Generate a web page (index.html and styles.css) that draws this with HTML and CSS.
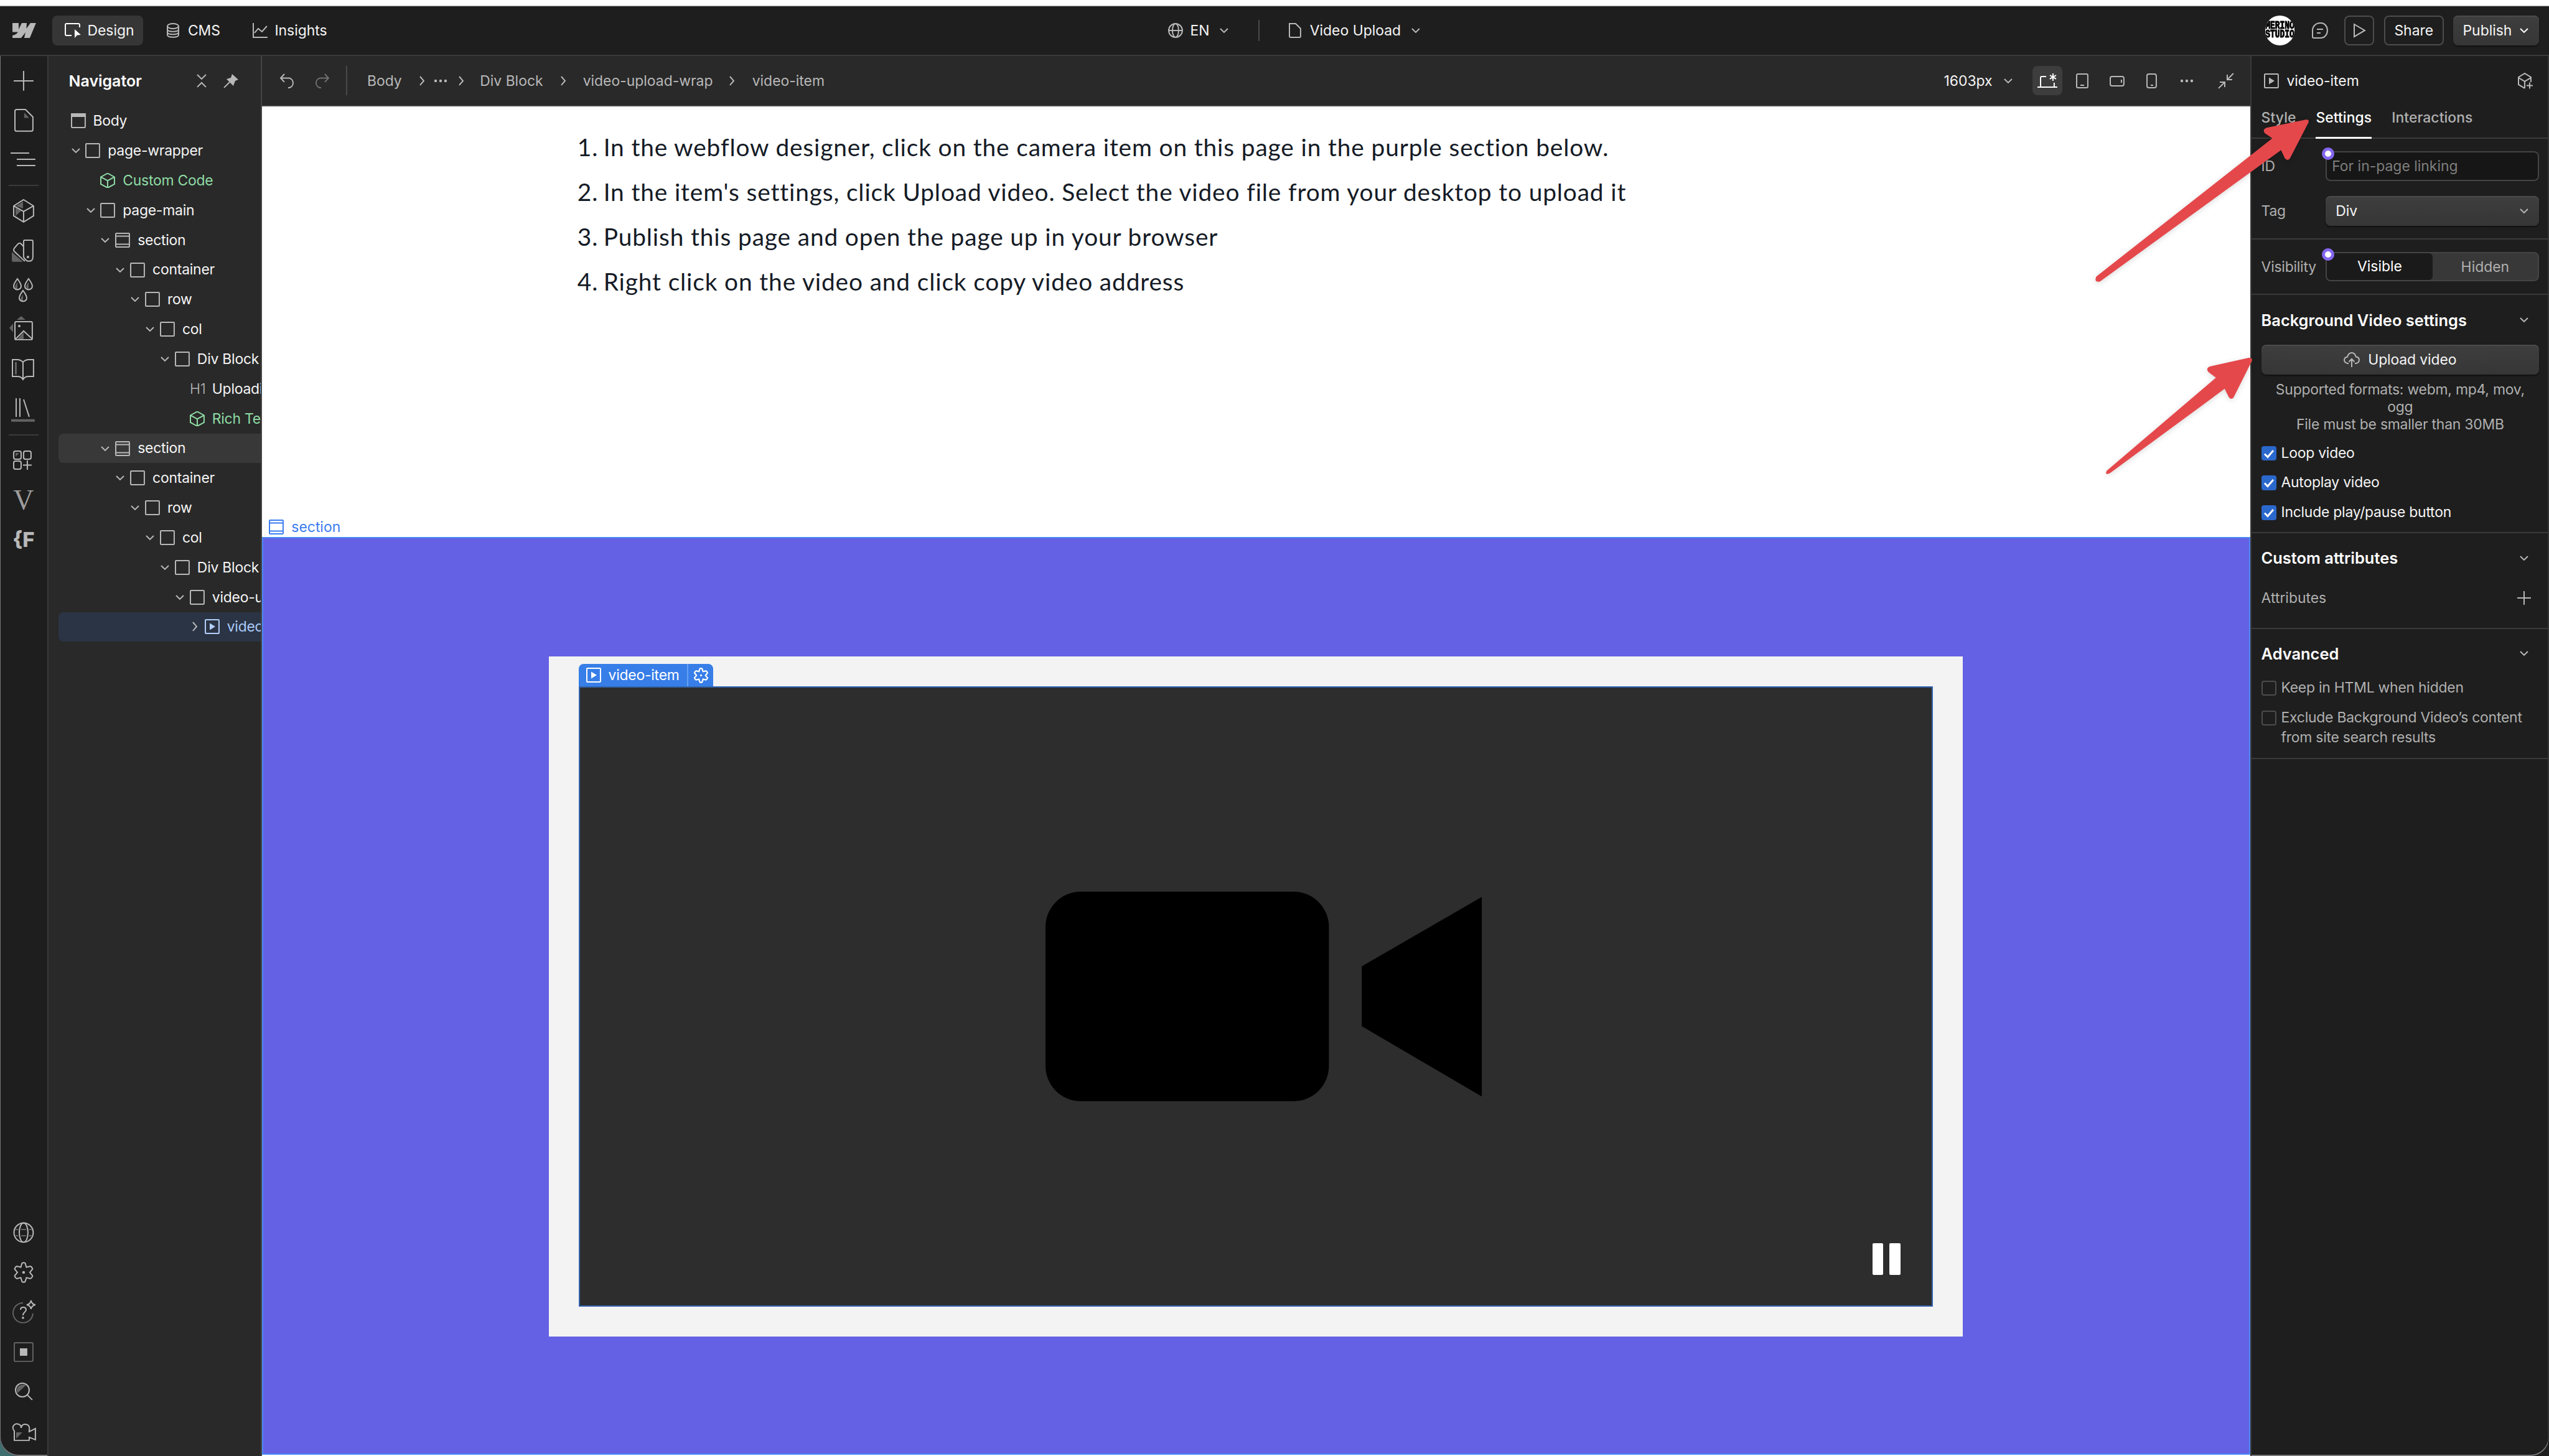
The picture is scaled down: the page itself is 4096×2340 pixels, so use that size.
FILE: index.html
```html
<!DOCTYPE html>
<html lang="en">
<head>
    <meta charset="UTF-8">
    <meta name="viewport" content="width=device-width, initial-scale=1.0">
    <title>Video Upload</title>
    <link rel="stylesheet" href="styles.css">
</head>
<body>
    <!-- icons used more than once -->
    <svg class="sprite">
        <symbol id="down" viewBox="0 0 24 24"><path d="M6 9l6 6 6-6"/></symbol>
        <symbol id="right" viewBox="0 0 24 24"><path d="M9 5l6 7-6 7"/></symbol>
        <symbol id="box" viewBox="0 0 24 24"><rect x="1" y="1" width="22" height="22" rx="1"/></symbol>
        <symbol id="section" viewBox="0 0 24 24"><rect x="1" y="1" width="22" height="22" rx="1"/><path d="M1 5.500h22M1 18.500h22"/></symbol>
        <symbol id="cube" viewBox="0 0 24 24"><path d="M12 0.500l11 6v11.500l-11 6-11-6v-11.500zM1 6.500l11 6 11-6M12 12.500v11"/></symbol>
        <symbol id="video" viewBox="0 0 24 24"><rect x="1" y="1" width="22" height="22" rx="1"/><path class="solid" d="M8 6.500v11l9-5.500z"/></symbol>
        <symbol id="gear" viewBox="0 0 40 40"><path d="M17.500 5q2.500-1.500 5 0l2 6.500 6.500-1.500q2.500 1 3.500 4.500l-4.500 5.500 4.500 5.500q-1 3.500-3.500 4.500l-6.500-1.500-2 6.500q-2.500 1.500-5 0l-2-6.500-6.500 1.500q-2.500-1-3.500-4.500l4.500-5.500-4.500-5.500q1-3.500 3.500-4.500l6.500 1.500z"/><circle class="solid" cx="20" cy="20" r="2.200"/></symbol>
        <symbol id="plus" viewBox="0 0 24 24"><path d="M12 1v22M1 12h22"/></symbol>
    </svg>

    <div class="app">
        <header class="topbar">
            <div class="topbar-left">
                <svg class="logo" viewBox="0 0 38 24"><path class="solid" d="M0 0h10v10l5-10h8l-.5 9 6.500-9h9L28 24h-9l2-9-7 9H0v-4q6-1 9-5.500H0z"/></svg>
                <div class="mode active">
                    <svg viewBox="0 0 26 24"><path d="M11 20H3a2 2 0 0 1-2-2V3a2 2 0 0 1 2-2h19a2 2 0 0 1 2 2v4"/><path class="solid" d="M16 10l10 9-6 .5-4 4.500z"/></svg>
                    <span>Design</span>
                </div>
                <div class="mode cms">
                    <svg viewBox="0 0 20 24"><ellipse cx="10" cy="5" rx="9" ry="4"/><path d="M1 5v14c0 5 18 5 18 0V5M1 10c0 5 18 5 18 0M1 14.500c0 5 18 5 18 0"/></svg>
                    <span>CMS</span>
                </div>
                <div class="mode insights">
                    <svg viewBox="0 0 24 24"><path d="M1 0v23h23M3 16l6-7 6 5L23 5"/></svg>
                    <span>Insights</span>
                </div>
            </div>
            <div class="topbar-center">
                <svg class="i24" viewBox="0 0 24 24"><circle cx="12" cy="12" r="11"/><ellipse cx="12" cy="12" rx="5" ry="11"/><path d="M1 12h22"/></svg>
                <span class="locale">EN</span>
                <svg class="i24"><use href="#down"/></svg>
                <i class="bar"></i>
                <svg class="i24" viewBox="0 0 24 24"><path d="M3 1h10l8 8v12a2 2 0 0 1-2 2H5a2 2 0 0 1-2-2z"/></svg>
                <span class="page-name">Video Upload</span>
                <svg class="i24"><use href="#down"/></svg>
            </div>
            <div class="topbar-right">
                <div class="avatar"><span>MERINO</span><span>STUDIO</span></div>
                <svg class="comment" viewBox="0 0 26 26"><path d="M13 1h2a10 12 0 0 1 0 24H3a2 2 0 0 1-2-2V13A12 12 0 0 1 13 1zM8 11h10M8 17h6"/></svg>
                <div class="btn play"><svg viewBox="0 0 24 24"><path d="M4 2l17 10L4 22z"/></svg></div>
                <div class="btn share">Share</div>
                <div class="btn publish">Publish <svg class="i24"><use href="#down"/></svg></div>
            </div>
        </header>

        <div class="workspace">
            <nav class="rail">
                <div class="rail-item"><svg viewBox="0 0 40 40"><path d="M20 4v32M4 20h32"/></svg></div>
                <div class="rail-item"><svg viewBox="0 0 40 40"><path class="shade" d="M21 8l8 8.500h-8z"/><path d="M9 3h14l12 12v20a3 3 0 0 1-3 3H9a3 3 0 0 1-3-3V6a3 3 0 0 1 3-3z"/></svg></div>
                <div class="rail-item"><svg viewBox="0 0 40 40"><path d="M-1 9h30M9 19h30M9 29h30"/></svg></div>
                <hr>
                <div class="rail-item"><svg viewBox="0 0 40 40"><path class="shade" d="M8 12l11-7v11zM7 15l9 5-9 8z"/><path d="M20 2l16 10v16L20 38 4 28V12zM4 12l16 9 16-9M20 21v17"/></svg></div>
                <div class="rail-item"><svg viewBox="0 0 40 40"><path class="shade" d="M1 22l18 16H3a2 2 0 0 1-2-2z"/><path d="M20 5a2 2 0 0 1 2-2h11a2 2 0 0 1 2 2v25q0 7-7 7-4 0-8-7zM20 13l-5-5q-2-1-4 1l-6 7q-2 3 0 5l17 16"/><circle class="solid" cx="27" cy="30" r="2"/></svg></div>
                <div class="rail-item"><svg viewBox="0 0 40 40"><path class="shade" d="M10 7v12q-4-2-4-5zM28 7v12q-4-2-4-5zM19 27v12q-4-2-4-5z"/><path d="M10 2q6 8 6 12a6 5.500 0 0 1-12 0q0-4 6-12zM28 2q6 8 6 12a6 5.500 0 0 1-12 0q0-4 6-12zM19 21q6 8 6 12a6 5.500 0 0 1-12 0q0-4 6-12z"/></svg></div>
                <div class="rail-item"><svg viewBox="0 0 40 40"><path class="shade" d="M16-2l7 6H9zM-3 17l6-7v14zM20 24v11H10z"/><rect x="6" y="7" width="28" height="29" rx="2"/><path d="M7 35l13-13 14 13"/><circle class="solid" cx="13" cy="14" r="2"/></svg></div>
                <div class="rail-item"><svg viewBox="0 0 40 40"><path class="shade" d="M6 8h3v20H6z"/><path d="M19 8q-4-4-9-4H2v27h8q6 0 9 5 3-5 9-5h8V4h-8q-5 0-9 4v28"/></svg></div>
                <div class="rail-item"><svg viewBox="0 0 40 40"><path d="M8 2v30M14 2v30M20 4l9 28"/><path class="shade" d="M0 36h38v4H0z"/></svg></div>
                <hr>
                <div class="rail-item"><svg viewBox="0 0 40 40"><path class="shade" d="M7 8h6l-6 6z"/><rect x="4" y="5" width="12" height="13" rx="3"/><rect x="20" y="5" width="12" height="13" rx="3"/><rect x="4" y="21" width="12" height="13" rx="3"/><path d="M26 20v15M19 27.500h14"/></svg></div>
                <div class="rail-item letter-v">V</div>
                <div class="rail-item letter-f">{F</div>

                <div class="rail-bottom">
                    <div class="rail-item"><svg viewBox="0 0 40 40"><path class="dim" d="M7 15h26M7 25h26" stroke-dasharray="4 5 8 5 4"/><circle cx="20" cy="20" r="15.500"/><ellipse cx="20" cy="20" rx="7" ry="15.500"/></svg></div>
                    <div class="rail-item"><svg><use href="#gear"/></svg></div>
                    <div class="rail-item"><svg viewBox="0 0 40 40"><path class="dim" d="M19 5a16 16 0 1 0 16 17"/><path d="M15 16q0-4 4.500-4t4.500 4q0 2-2.500 4t-2.500 5M32 1q1 6 7 7-6 1-7 7-1-6-7-7 6-1 7-7z"/><circle class="solid" cx="19" cy="29" r="1.800"/></svg></div>
                    <div class="rail-item"><svg viewBox="0 0 40 40"><rect class="dim" x="5" y="5" width="30" height="30" rx="2"/><path class="solid" d="M14 14h12v12H14z"/></svg></div>
                    <div class="rail-item"><svg viewBox="0 0 40 40"><path class="shade" d="M24 10L10 23q-3-8 3-12 5-3 11-1z"/><circle cx="18" cy="18" r="11"/><path d="M26 26l8 8"/></svg></div>
                    <div class="rail-item"><svg viewBox="0 0 40 40"><path class="shade" d="M8 22h10L8 32z"/><path d="M5 20Q1 15 4 11t8-2q4 1 4 6 1-6 6-6 9 0 7 10v2l10-5v18l-10-4v5H5z"/></svg></div>
                </div>
            </nav>

            <aside class="navigator">
                <div class="nav-head">
                    <h2>Navigator</h2>
                    <svg class="i24" viewBox="0 0 24 24"><path d="M5 2l7 7 7-7M5 22l7-7 7 7"/></svg>
                    <svg class="i24 pin" viewBox="0 0 24 24"><path class="solid" d="M14 1l10 9-5 2-3 8-4-4-4-4-3-3 7-2z"/><path d="M1 23l9-9"/></svg>
                </div>
                <ul class="tree">
                    <li class="lv0"><svg class="i24" viewBox="0 0 24 24"><rect x="1" y="1" width="22" height="22" rx="1"/><path class="solid" d="M0 0h24v6H0z"/></svg>Body</li>
                    <li class="lv1"><svg class="tog"><use href="#down"/></svg><svg class="i24"><use href="#box"/></svg>page-wrapper</li>
                    <li class="lv2 green"><i class="tog"></i><svg class="i24"><use href="#cube"/></svg>Custom Code</li>
                    <li class="lv2"><svg class="tog"><use href="#down"/></svg><svg class="i24"><use href="#box"/></svg>page-main</li>
                    <li class="lv3"><svg class="tog"><use href="#down"/></svg><svg class="i24"><use href="#section"/></svg>section</li>
                    <li class="lv4"><svg class="tog"><use href="#down"/></svg><svg class="i24"><use href="#box"/></svg>container</li>
                    <li class="lv5"><svg class="tog"><use href="#down"/></svg><svg class="i24"><use href="#box"/></svg>row</li>
                    <li class="lv6"><svg class="tog"><use href="#down"/></svg><svg class="i24"><use href="#box"/></svg>col</li>
                    <li class="lv7"><svg class="tog"><use href="#down"/></svg><svg class="i24"><use href="#box"/></svg>Div Block</li>
                    <li class="lv8"><i class="tog"></i><span class="h1-icon">H1</span>Uploading</li>
                    <li class="lv8 green"><i class="tog"></i><svg class="i24"><use href="#cube"/></svg>Rich Text</li>
                    <li class="lv3 hovered"><svg class="tog"><use href="#down"/></svg><svg class="i24"><use href="#section"/></svg>section</li>
                    <li class="lv4"><svg class="tog"><use href="#down"/></svg><svg class="i24"><use href="#box"/></svg>container</li>
                    <li class="lv5"><svg class="tog"><use href="#down"/></svg><svg class="i24"><use href="#box"/></svg>row</li>
                    <li class="lv6"><svg class="tog"><use href="#down"/></svg><svg class="i24"><use href="#box"/></svg>col</li>
                    <li class="lv7"><svg class="tog"><use href="#down"/></svg><svg class="i24"><use href="#box"/></svg>Div Block</li>
                    <li class="lv8"><svg class="tog"><use href="#down"/></svg><svg class="i24"><use href="#box"/></svg>video-upload-wrap</li>
                    <li class="lv9 selected"><svg class="tog"><use href="#right"/></svg><svg class="i24"><use href="#video"/></svg>video-item</li>
                </ul>
            </aside>

            <main class="stage">
                <div class="toolbar">
                    <svg class="i24" viewBox="0 0 24 24"><path d="M7 1L1 7.500 7 14M1 7.500h14a8 8 0 0 1 0 15.500h-2"/></svg>
                    <svg class="i24 redo" viewBox="0 0 24 24"><path d="M17 1l6 6.500-6 6.500M23 7.500H9A8 8 0 0 0 9 23h2"/></svg>
                    <i class="bar"></i>
                    <span class="crumb c-body">Body</span>
                    <svg class="i24"><use href="#right"/></svg>
                    <svg class="i24 dots" viewBox="0 0 24 24"><circle cx="4" cy="12" r="2.200"/><circle cx="12" cy="12" r="2.200"/><circle cx="20" cy="12" r="2.200"/></svg>
                    <svg class="i24 c-sep"><use href="#right"/></svg>
                    <span class="crumb c-div">Div Block</span>
                    <svg class="i24"><use href="#right"/></svg>
                    <span class="crumb c-wrap">video-upload-wrap</span>
                    <svg class="i24"><use href="#right"/></svg>
                    <span class="crumb">video-item</span>

                    <div class="devices">
                        <span class="width">1603px</span>
                        <svg class="i24"><use href="#down"/></svg>
                        <div class="device on"><svg viewBox="0 0 32 24"><path d="M14 5H7a2 2 0 0 0-2 2v14M0 22h32M27 15v7M25 0v12M20 3l10 6M30 3l-10 6"/></svg></div>
                        <div class="device"><svg viewBox="0 0 32 24"><rect x="7" y="1" width="18" height="22" rx="2"/><path d="M13 19h6"/></svg></div>
                        <div class="device"><svg viewBox="0 0 32 24"><rect x="5" y="5" width="22" height="15" rx="3"/><path d="M23 10v5"/></svg></div>
                        <div class="device"><svg viewBox="0 0 32 24"><rect x="9" y="1" width="15" height="22" rx="3"/><path d="M15 19h4"/></svg></div>
                        <div class="device"><svg class="dots" viewBox="0 0 32 24"><circle cx="6" cy="12" r="2.200"/><circle cx="14" cy="12" r="2.200"/><circle cx="22" cy="12" r="2.200"/></svg></div>
                        <svg class="i24 fit" viewBox="0 0 24 24"><path d="M24 0L14 10M14 2v8h8M0 24l10-10M2 14h8v8"/></svg>
                    </div>
                </div>

                <div class="canvas">
                    <ol class="steps">
                        <li><span>1.</span>In the webflow designer, click on the camera item on this page in the purple section below.</li>
                        <li><span>2.</span>In the item's settings, click Upload video. Select the video file from your desktop to upload it</li>
                        <li><span>3.</span>Publish this page and open the page up in your browser</li>
                        <li><span>4.</span>Right click on the video and click copy video address</li>
                    </ol>
                    <div class="section-label"><svg class="i24"><use href="#section"/></svg>section</div>
                    <section class="purple">
                        <div class="video-wrap">
                            <div class="video-item">
                                <div class="tag">
                                    <svg class="i24"><use href="#video"/></svg>
                                    <span>video-item</span>
                                    <div class="tag-gear"><svg><use href="#gear"/></svg></div>
                                </div>
                                <svg class="camera" viewBox="0 0 704 338"><rect width="457" height="338" rx="57"/><path d="M510 120.500L703.500 8.500v322L510 217z"/></svg>
                                <div class="pause"><i></i><i></i></div>
                            </div>
                        </div>
                    </section>
                </div>
            </main>

            <aside class="panel">
                <div class="panel-head">
                    <svg class="i24"><use href="#video"/></svg>
                    <span>video-item</span>
                    <svg class="new-comp" viewBox="0 0 26 26"><path d="M13 25L3 19V7l10-6 10 6v8M3 8l10 6 10-6M13 14v11M16 20.500h10M21 15.500v10"/></svg>
                </div>
                <div class="tabs">
                    <span>Style</span>
                    <span class="current">Settings</span>
                    <span>Interactions</span>
                </div>
                <div class="group fields">
                    <div class="field"><label>ID</label><div class="input">For in-page linking<i class="dot"></i></div></div>
                    <div class="field"><label>Tag</label><div class="btn select">Div<svg class="i24"><use href="#down"/></svg></div></div>
                </div>
                <div class="group visibility">
                    <div class="field"><label>Visibility</label><div class="switch"><span class="on">Visible</span><span>Hidden</span><i class="dot"></i></div></div>
                </div>
                <div class="group bg-video">
                    <div class="group-head">Background Video settings<svg class="i24"><use href="#down"/></svg></div>
                    <div class="btn upload"><svg viewBox="0 0 26 24"><path d="M8 18H6.500Q1 17 1 12.500 1.500 8 6 7.500 8 1 13 1t7 6.500q5 .5 5 5Q25 17 20 18h-2M13 24V11M8.500 15.500L13 11l4.500 4.500"/></svg>Upload video</div>
                    <p>Supported formats: webm, mp4, mov, ogg<br>File must be smaller than 30MB</p>
                    <div class="check"><i class="on"><svg viewBox="0 0 24 24"><path d="M5 12.500l5 5L19 7"/></svg></i><span>Loop video</span></div>
                    <div class="check"><i class="on"><svg viewBox="0 0 24 24"><path d="M5 12.500l5 5L19 7"/></svg></i><span>Autoplay video</span></div>
                    <div class="check"><i class="on"><svg viewBox="0 0 24 24"><path d="M5 12.500l5 5L19 7"/></svg></i><span>Include play/pause button</span></div>
                </div>
                <div class="group custom">
                    <div class="group-head">Custom attributes<svg class="i24"><use href="#down"/></svg></div>
                    <div class="attrs">Attributes<svg class="i24"><use href="#plus"/></svg></div>
                </div>
                <div class="group advanced">
                    <div class="group-head">Advanced<svg class="i24"><use href="#down"/></svg></div>
                    <div class="check off"><i></i><span>Keep in HTML when hidden</span></div>
                    <div class="check off"><i></i><span>Exclude Background Video’s content<br>from site search results</span></div>
                </div>
            </aside>
        </div>

        <!-- red arrows on top of everything -->
        <svg class="arrows" viewBox="0 0 4110 2348">
            <path d="M3718 193L3655 206Q3647 209 3652 215L3664 223 3380 446Q3376 456 3386 454L3678 242 3684 255Q3689 261 3693 254L3722 198Q3724 192 3718 193z"/>
            <path d="M3626 577L3563 591Q3556 594 3561 600L3573 609 3397 759Q3393 767 3402 763L3587 627 3594 641Q3599 646 3602 640L3631 582Q3632 576 3626 577z"/>
        </svg>
    </div>
</body>
</html>
```
FILE: styles.css
```css
/* 1rem = 10 units of the 4110 x 2348 layout */
html {
    font-size: 9.9659px;
}
* {
    box-sizing: border-box;
}
body {
    margin: 0;
    background: linear-gradient(90deg, #3f6f70, #1e1e1e 20%);
    font-family: Inter, "Liberation Sans", sans-serif;
    font-size: 2.3rem;
    color: #f5f5f5;
    overflow: hidden;
}
h2, p, ul, ol {
    margin: 0;
    padding: 0;
    list-style: none;
}
svg {
    display: block;
    flex: none;
    overflow: visible;
    fill: none;
    stroke: currentColor;
    stroke-width: 2;
}
.sprite {
    position: absolute;
    width: 0;
    height: 0;
}
.solid, .dots circle {
    fill: currentColor;
    stroke: none;
}
.shade {
    fill: #636363;
    stroke: none;
}
.dim {
    stroke: #636363;
}
.i24 {
    width: 2.4rem;
    height: 2.4rem;
    color: #b8b8b8;
}
.app {
    position: relative;
    display: flex;
    flex-direction: column;
    height: 100vh;
    background: #1e1e1e;
    border-radius: 0 0 3rem 3rem;
    border-top: 8px solid #fff;
    overflow: hidden;
    box-shadow: inset 0 -1px 0 1px #77777c;
}

/* top bar */
.topbar {
    display: flex;
    align-items: center;
    height: 8.2rem;
    border-top: 2px solid #ddd;
    border-bottom: 2px solid #3a3a3a;
    background: #1e1e1e;
}
.topbar-left {
    display: flex;
    align-items: center;
    width: 188.3rem;
    padding-left: 2.05rem;
}
.logo {
    width: 3.8rem;
    height: 2.4rem;
    margin-right: 2.55rem;
    color: #b8b8b8;
}
.mode {
    display: flex;
    align-items: center;
    height: 4.8rem;
    border-radius: 0.8rem;
}
.mode svg {
    height: 2.4rem;
    color: #b8b8b8;
}
.mode.active {
    width: 14.7rem;
    padding-left: 2rem;
    gap: 1.1rem;
    background: #363636;
}
.mode.active svg {
    width: 2.6rem;
    color: #fff;
}
.cms {
    width: 13.8rem;
    margin-left: 3.8rem;
    gap: 1.4rem;
}
.cms svg {
    width: 2rem;
}
.insights {
    gap: 1.2rem;
}
.insights svg {
    width: 2.4rem;
}
.topbar-center {
    display: flex;
    align-items: center;
}
.locale {
    width: 4.3rem;
    margin-left: 1.2rem;
}
.bar {
    width: 2px;
    height: 3.4rem;
    background: #4a4a4a;
}
.topbar-center .bar {
    margin: 0 4.5rem 0 4.3rem;
}
.page-name {
    width: 15.9rem;
    margin-left: 1.2rem;
}
.topbar-right {
    display: flex;
    align-items: center;
    margin-left: auto;
    padding-right: 1.6rem;
}
.avatar {
    display: flex;
    flex-direction: column;
    align-items: center;
    justify-content: center;
    width: 4.8rem;
    height: 4.8rem;
    border-radius: 50%;
    background: #fff;
    color: #000;
    font: bold 1.3rem/1.4rem "Liberation Mono", monospace;
    overflow: hidden;
    -webkit-text-stroke: 0.8px #000;
}
.avatar span {
    transform: scaleY(1.4);
}
.comment {
    width: 2.6rem;
    height: 2.6rem;
    margin: 0 2.6rem 0 2.8rem;
    color: #b8b8b8;
}
.btn {
    display: flex;
    align-items: center;
    justify-content: center;
    height: 4.8rem;
    border: 2px solid #4c4c4c;
    border-radius: 0.8rem;
}
.play {
    width: 4.8rem;
}
.play svg {
    width: 2.4rem;
    height: 2.4rem;
    color: #b8b8b8;
}
.share {
    width: 9.6rem;
    margin: 0 1.5rem 0 1.6rem;
}
.publish, .select, .upload {
    border: 0;
    background: linear-gradient(#3e3e3e, #363636);
    box-shadow: inset 0 2px 0 #4b4b4b, 0 2px 2px #111;
}
.publish {
    width: 13.9rem;
    justify-content: flex-start;
    padding-left: 1.6rem;
    gap: 0.8rem;
}
.publish svg {
    color: #fff;
}

.workspace {
    display: flex;
    flex: 1;
    min-height: 0;
}

/* icon rail */
.rail {
    display: flex;
    flex-direction: column;
    width: 7.8rem;
    padding-top: 0.8rem;
    border-right: 2px solid #3a3a3a;
    color: #b8b8b8;
}
.rail-item {
    display: flex;
    align-items: center;
    justify-content: center;
    flex: none;
    height: 6.4rem;
}
.rail-item svg {
    width: 4rem;
    height: 4rem;
}
.rail hr {
    width: 4.8rem;
    height: 2px;
    margin: 0.8rem auto;
    border: 0;
    background: #3a3a3a;
    flex: none;
}
.letter-v {
    font-family: "Liberation Serif", serif;
    font-size: 4.6rem;
    color: #9c9c9c;
}
.letter-f {
    font-size: 3.3rem;
    font-weight: 800;
}
.rail-bottom {
    margin-top: auto;
    padding-bottom: 0.8rem;
}

/* navigator */
.navigator {
    width: 34.4rem;
    border-right: 2px solid #454545;
    background: #292929;
    overflow: hidden;
}
.nav-head {
    display: flex;
    align-items: center;
    height: 8.1rem;
    padding-left: 3.3rem;
}
.nav-head h2 {
    width: 20.2rem;
    font-size: 2.5rem;
    font-weight: 600;
    color: #fff;
}
.nav-head .pin {
    margin-left: 2.3rem;
}
.tree li {
    display: flex;
    align-items: center;
    height: 4.8rem;
    margin-left: 1.6rem;
    border-radius: 0.8rem 0 0 0.8rem;
    letter-spacing: -0.01em;
    white-space: nowrap;
}
.tree .i24 {
    margin-right: 1.2rem;
}
.tog {
    width: 2.4rem;
    height: 2.4rem;
    margin-right: 0.4rem;
    flex: none;
    color: #b8b8b8;
}
.lv0 { padding-left: 2rem; }
.lv1 { padding-left: 1.6rem; }
.lv2 { padding-left: 4rem; }
.lv3 { padding-left: 6.4rem; }
.lv4 { padding-left: 8.8rem; }
.lv5 { padding-left: 11.2rem; }
.lv6 { padding-left: 13.6rem; }
.lv7 { padding-left: 16rem; }
.lv8 { padding-left: 18.4rem; }
.lv9 { padding-left: 20.8rem; }
.green, .green .i24 {
    color: #8fdca6;
}
.h1-icon {
    width: 3.6rem;
    color: #b8b8b8;
    font-weight: 300;
    flex: none;
}
.hovered {
    background: #383838;
}
.selected {
    background: #2b3444;
    color: #a9c9fb;
}
.selected .i24 {
    color: #b4d0fb;
}

/* stage */
.stage {
    display: flex;
    flex-direction: column;
    flex: 1;
    min-width: 0;
}
.toolbar {
    display: flex;
    align-items: center;
    height: 8.2rem;
    flex: none;
    padding-left: 3rem;
    border-bottom: 2px solid #454545;
    background: #292929;
    color: #b8b8b8;
}
.toolbar .redo {
    margin-left: 3.1rem;
    color: #707070;
}
.toolbar .bar {
    height: 4.8rem;
    margin: 0 3.2rem 0 2.7rem;
}
.c-body {
    width: 7.6rem;
}
.toolbar .dots {
    margin-left: 0.6rem;
}
.c-sep {
    margin-left: 1rem;
}
.c-div {
    width: 12.2rem;
    margin-left: 1.8rem;
}
.c-wrap {
    width: 22.8rem;
    margin-left: 2rem;
}
.c-wrap + svg {
    margin-right: 2.1rem;
}
.devices {
    display: flex;
    align-items: center;
    margin-left: auto;
    padding-right: 2.7rem;
}
.width {
    width: 9.2rem;
    color: #f5f5f5;
}
.device {
    display: flex;
    align-items: center;
    justify-content: center;
    width: 4.8rem;
    height: 4.8rem;
    margin-left: 0.8rem;
    border-radius: 0.8rem;
}
.device svg {
    width: 3.2rem;
    height: 2.4rem;
}
.device.on {
    margin-left: 2.7rem;
    background: #3d3d3d;
    color: #fff;
}
.fit {
    margin-left: 2.8rem;
}
.canvas {
    display: flex;
    flex-direction: column;
    flex: 1;
    background: #fff;
}
.steps {
    height: 66.2rem;
    padding: 3rem 0 0 50.9rem;
    font-family: Lato, "Open Sans", sans-serif;
    font-size: 3.9rem;
    line-height: 7.2rem;
    letter-spacing: 0.022em;
    color: #151b26;
    white-space: nowrap;
}
.steps li {
    display: flex;
}
.steps span {
    width: 4.2rem;
}
.section-label {
    display: flex;
    align-items: center;
    gap: 1.2rem;
    height: 3.2rem;
    padding-left: 1.2rem;
    color: #3b7df0;
}
.section-label svg {
    color: #3b7df0;
}
.purple {
    flex: 1;
    padding: 19.1rem 0 0 46.1rem;
    border: 2px solid #4b8af5;
    background: #6461e4;
    margin-bottom: 2px;
}
.video-wrap {
    width: 228rem;
    height: 109.6rem;
    padding: 4.8rem;
    background: #f3f3f3;
}
.video-item {
    position: relative;
    display: flex;
    justify-content: center;
    height: 100%;
    padding-top: 32.9rem;
    border: 2px solid #3466b0;
    background: #2d2d2d;
}
.tag {
    position: absolute;
    left: -2px;
    bottom: calc(100% + 2px);
    display: flex;
    align-items: center;
    width: 21.7rem;
    height: 3.6rem;
    padding-left: 1.2rem;
    gap: 1.2rem;
    border-radius: 0.8rem 0.8rem 0 0;
    background: #377ee8;
    color: #fff;
    letter-spacing: -0.01em;
    white-space: nowrap;
}
.tag .i24 {
    color: #fff;
}
.tag-gear {
    display: flex;
    align-items: center;
    justify-content: center;
    flex: none;
    width: 4.4rem;
    height: 100%;
    margin-left: auto;
    border-left: 2px solid #66a0f3;
}
.tag-gear svg {
    width: 2.9rem;
    height: 2.9rem;
    stroke-width: 3;
}
.camera {
    width: 70.4rem;
    height: 33.8rem;
    margin-left: 2.5rem;
    fill: #000;
    stroke: none;
}
.pause {
    position: absolute;
    right: 5.1rem;
    bottom: 4.9rem;
    display: flex;
    gap: 1rem;
}
.pause i {
    width: 1.75rem;
    height: 5.1rem;
    border-radius: 2px;
    background: #fff;
}

/* settings panel */
.panel {
    width: 48.2rem;
    border-left: 2px solid #3a3a3a;
    border-right: 2px solid #333;
}
.panel-head {
    display: flex;
    align-items: center;
    height: 8rem;
    padding: 0 2.4rem 0 2rem;
}
.panel-head span {
    margin-left: 1.3rem;
}
.new-comp {
    width: 2.6rem;
    height: 2.6rem;
    margin-left: auto;
    color: #b8b8b8;
}
.tabs {
    display: flex;
    height: 5.4rem;
    padding-left: 1.6rem;
    gap: 3.2rem;
    border-bottom: 2px solid #3a3a3a;
    font-weight: 500;
    line-height: 4.1rem;
    letter-spacing: 0.003em;
    color: #b0b0b0;
}
.tabs .current {
    height: 5.4rem;
    border-bottom: 3px solid #fff;
    color: #fff;
}
.group {
    padding: 0 1.4rem 0 1.6rem;
    border-bottom: 2px solid #3a3a3a;
}
.fields {
    height: 16.2rem;
    padding-top: 2rem;
}
.field {
    display: flex;
    align-items: center;
    margin-bottom: 2.4rem;
}
.field label {
    width: 10.4rem;
    letter-spacing: -0.01em;
    color: #b0b0b0;
}
.input, .switch, .select {
    position: relative;
    display: flex;
    align-items: center;
    flex: 1;
    height: 4.8rem;
    border-radius: 0.8rem;
}
.input {
    padding-left: 0.8rem;
    border: 2px solid #444;
    background: #161616;
    color: #7e7e7e;
}
.dot {
    position: absolute;
    left: -0.8rem;
    top: -0.8rem;
    width: 2rem;
    height: 2rem;
    border: 0.6rem solid #8467ef;
    border-radius: 50%;
    background: #fff;
}
.select {
    justify-content: space-between;
    padding: 0 1.2rem 0 1.6rem;
}
.visibility {
    height: 9rem;
    padding-top: 2rem;
}
.switch {
    border: 2px solid #444;
    background: #383838;
    color: #b0b0b0;
}
.switch span {
    flex: 1;
    text-align: center;
}
.switch .on {
    height: 100%;
    border-radius: 0.6rem;
    background: #1a1a1a;
    color: #fff;
    line-height: 4.4rem;
}
.group-head {
    display: flex;
    align-items: center;
    justify-content: space-between;
    height: 8rem;
    padding-right: 1.2rem;
    font-size: 2.55rem;
    font-weight: 600;
    color: #fff;
}
.bg-video {
    height: 38.4rem;
}
.upload {
    gap: 1.3rem;
    letter-spacing: -0.005em;
}
.upload svg {
    width: 2.6rem;
    height: 2.4rem;
    color: #b8b8b8;
}
.bg-video p {
    padding: 1.1rem 0 1.6rem;
    line-height: 2.8rem;
    letter-spacing: -0.01em;
    text-align: center;
    color: #b0b0b0;
}
.check {
    display: flex;
    gap: 0.8rem;
    margin-bottom: 1.6rem;
    line-height: 3.2rem;
    letter-spacing: -0.01em;
}
.check i {
    width: 2.4rem;
    height: 2.4rem;
    margin-top: 0.4rem;
    border-radius: 0.4rem;
}
.check i.on {
    background: #2b68cc;
}
.check i svg {
    width: 2.4rem;
    height: 2.4rem;
    color: #fff;
    stroke-width: 3;
}
.custom {
    height: 15.4rem;
}
.attrs {
    display: flex;
    align-items: center;
    justify-content: space-between;
    height: 4.8rem;
    padding-right: 1.2rem;
    color: #b0b0b0;
}
.advanced {
    height: 21rem;
}
.off {
    color: #b0b0b0;
}
.off i {
    border: 2px solid #4c4c4c;
}

.arrows {
    position: absolute;
    left: 0;
    top: -8px;
    width: 411rem;
    height: 234.8rem;
    fill: #e5484b;
    stroke: none;
    filter: drop-shadow(0 2px 4px rgba(0, 0, 0, 0.15));
}
```
